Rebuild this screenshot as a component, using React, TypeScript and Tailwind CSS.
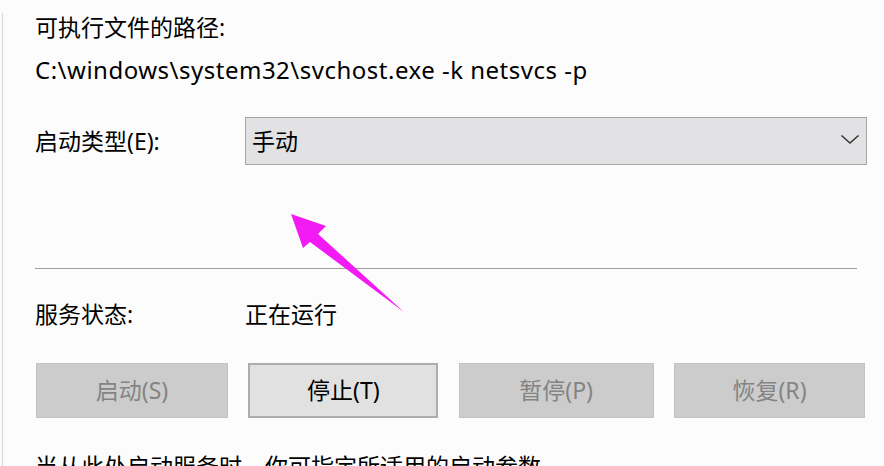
const font = { fontFamily: '"Noto Sans", "Noto Sans CJK SC", sans-serif' };

const buttons = [
  { label: '启动(S)', width: 'w-[192px]', enabled: false },
  { label: '停止(T)', width: 'w-[190px]', enabled: true },
  { label: '暂停(P)', width: 'w-[195px]', enabled: false },
  { label: '恢复(R)', width: 'w-[191px]', enabled: false },
];

const Arrow = () => (
  <svg
    className="absolute left-0 top-0 pointer-events-none"
    width="884"
    height="466"
    viewBox="0 0 884 466"
  >
    <polygon
      points="291,214 326,226 318,234 404,312 310,242 303,248"
      fill="#f31bf3"
    />
  </svg>
);

export default function App() {
  return (
    <div
      className="relative w-[884px] h-[466px] overflow-hidden bg-[#fcfcfd] pl-[2px] text-[23px] text-black"
      style={font}
    >
      <div className="h-full border-l border-[#d6d6d8] pl-[32px]">
        {/* Executable path */}
        <div className="mt-[13px] leading-[28px]">可执行文件的路径:</div>
        <div className="mt-[15px] leading-[28px] text-[24px] tracking-[0.5px]">
          C:\windows\system32\svchost.exe -k netsvcs -p
        </div>

        {/* Startup type */}
        <div className="mt-[33px] flex items-center">
          <div className="w-[210px] leading-[28px]">启动类型(E):</div>
          <div className="w-[622px] h-[48px] flex items-center justify-between bg-[#e2e1e3] border border-[#a6a6a8] pl-[6px] pr-[7px]">
            <span className="leading-[28px]">手动</span>
            <svg width="18" height="9" viewBox="0 0 18 9" className="mt-[-3px]">
              <polyline points="0.5,0.5 9,8 17.5,0.5" fill="none" stroke="#333" strokeWidth="1.4" />
            </svg>
          </div>
        </div>

        <div className="mt-[103px] w-[822px] h-px bg-[#9d9d9f]" />

        {/* Service status */}
        <div className="mt-[31px] flex leading-[28px]">
          <div className="w-[210px]">服务状态:</div>
          <div>正在运行</div>
        </div>

        <div className="mt-[35px] ml-[1px] w-[829px] flex justify-between">
          {buttons.map((b) => (
            <div
              key={b.label}
              className={`${b.width} h-[55px] flex items-center justify-center ${
                b.enabled
                  ? 'bg-[#e1e1e1] border-2 border-[#adadad] text-black'
                  : 'bg-[#cccccc] border border-[#c2c2c2] text-[#848484]'
              }`}
            >
              {b.label}
            </div>
          ))}
        </div>

        <div className="mt-[34px] leading-[28px] whitespace-nowrap">
          当从此处启动服务时，你可指定所适用的启动参数。
        </div>
      </div>
      <Arrow />
    </div>
  );
}
